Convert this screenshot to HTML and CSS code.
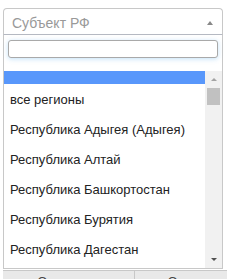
FILE: index.html
```html
<!DOCTYPE html>
<html lang="ru">
<head>
    <meta charset="UTF-8">
    <meta name="viewport" content="width=device-width, initial-scale=1.0">
    <title>Субъект РФ</title>
    <link rel="stylesheet" href="styles.css">
</head>
<body>
    <div class="region-select">
        <div class="choice">
            <span class="placeholder">Субъект РФ</span>
            <span class="arrow-up"></span>
        </div>

        <div class="drop">
            <div class="search">
                <input type="text" class="search-field" autofocus>
            </div>
            <div class="results-wrap">
                <ul class="results">
                    <li class="highlighted"></li>
                    <li>все регионы</li>
                    <li>Республика Адыгея (Адыгея)</li>
                    <li>Республика Алтай</li>
                    <li>Республика Башкортостан</li>
                    <li>Республика Бурятия</li>
                    <li>Республика Дагестан</li>
                </ul>
                <div class="scrollbar">
                    <div class="sb-btn"><span class="tri-up"></span></div>
                    <div class="sb-track"><div class="sb-thumb"></div></div>
                    <div class="sb-btn"><span class="tri-down"></span></div>
                </div>
            </div>
        </div>
    </div>

    <nav class="tabs">
        <a href="#">О сервисе</a>
        <a href="#">О команде</a>
    </nav>
</body>
</html>
```

FILE: styles.css
```css
/* Reset */
* {
    margin: 0;
    padding: 0;
    box-sizing: border-box;
}

html, body {
    overflow: hidden;
}

body {
    font-family: 'Liberation Sans', Arial, sans-serif;
    background-color: #fff;
    color: #222;
    width: 227px;
}

/* Select box */
.region-select {
    margin: 8px 0 0 3px;
    width: 220px;
}

.choice {
    height: 27px;
    border: 1px solid #c8c8c8;
    border-bottom-color: #b5b9c2;
    border-radius: 4px 4px 0 0;
    display: flex;
    align-items: center;
    justify-content: space-between;
    padding: 2px 8px 0 8px;
}

.placeholder {
    font-size: 14px;
    color: #999;
}

.arrow-up {
    width: 0;
    height: 0;
    border-left: 3px solid transparent;
    border-right: 3px solid transparent;
    border-bottom: 4px solid #888;
    margin-right: 1px;
}

/* Dropdown */
.drop {
    border: 1px solid #c8c8c8;
    border-top: none;
}

.search {
    padding: 5px 4px 13px 4px;
}

.search-field {
    display: block;
    width: 210px;
    height: 18px;
    border: 1px solid #a9a9a9;
    border-radius: 3px;
    box-shadow: 0 1px 5px rgba(82, 168, 236, 0.35);
    outline: none;
    font-size: 13px;
}

.results-wrap {
    display: flex;
    height: 197px;
    overflow: hidden;
}

.results {
    list-style: none;
    width: 201px;
    font-size: 13px;
}

.results li {
    height: 30px;
    line-height: 30px;
    padding-left: 6px;
    white-space: nowrap;
}

.results li.highlighted {
    height: 13px;
    margin-bottom: 1px;
    background-color: #5897fb;
}

/* Scrollbar */
.scrollbar {
    width: 17px;
    background-color: #f1f1f1;
    display: flex;
    flex-direction: column;
}

.sb-btn {
    height: 17px;
    display: flex;
    align-items: center;
    justify-content: center;
}

.tri-up {
    border-left: 3px solid transparent;
    border-right: 3px solid transparent;
    border-bottom: 3px solid #a3a3a3;
}

.tri-down {
    border-left: 3px solid transparent;
    border-right: 3px solid transparent;
    border-top: 3px solid #505050;
}

.sb-track {
    flex: 1;
    padding: 0 2px;
}

.sb-thumb {
    height: 17px;
    background-color: #c1c1c1;
}

/* Tabs */
.tabs {
    display: flex;
    width: 264px;
    margin-left: 3px;
    background-color: #e9e9e9;
    border-top: 1px solid #c8c8c8;
    margin-top: 1px;
}

.tabs a {
    width: 131px;
    text-align: center;
    font-size: 13px;
    color: #444;
    text-decoration: none;
    padding: 3px 0;
    border-left: 1px solid #c8c8c8;
}

.tabs a:first-child {
    border-left: none;
}
```
